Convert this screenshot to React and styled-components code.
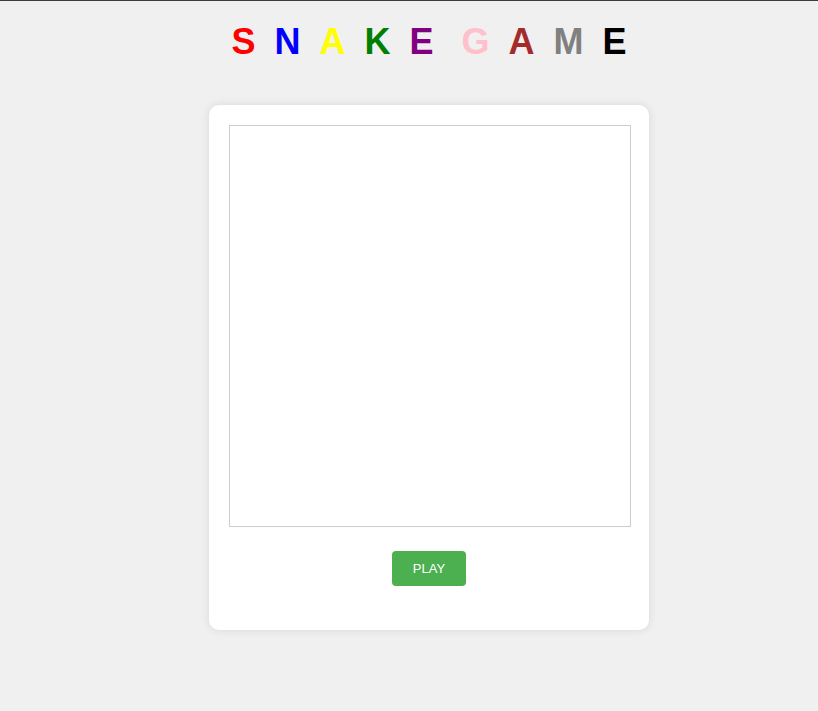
import React from "react";
import styled, { createGlobalStyle } from "styled-components";

const Global = createGlobalStyle`
  html, body { margin: 0; padding: 0; }
  body {
    background: #f0f0f0;
    font-family: "Liberation Sans", Arial, sans-serif;
    border-top: 1px solid #3c3c3c;
    min-height: 710px;
  }
`;

const Page = styled.div`
  display: flex;
  flex-direction: column;
  align-items: center;
  padding-left: 40px;
`;

const Title = styled.h1`
  display: flex;
  align-items: baseline;
  gap: 19px;
  margin: 20px 0 43px;
  font-size: 36px;
  font-weight: bold;
  line-height: 41px;
`;

const Letter = styled.span`
  color: ${(p) => p.$c};
  margin-left: ${(p) => (p.$word ? "9px" : "0")};
`;

const Card = styled.div`
  box-sizing: border-box;
  width: 440px;
  background: #fff;
  border-radius: 10px;
  box-shadow: 0 0 10px rgba(0, 0, 0, 0.1);
  padding: 20px 20px 44px;
  display: flex;
  flex-direction: column;
  align-items: flex-start;
`;

const Board = styled.div`
  flex: none;
  width: 400px;
  height: 400px;
  border: 1px solid #ccc;
  background: #fff;
`;

const PlayButton = styled.button`
  align-self: center;
  margin-top: 24px;
  width: 74px;
  height: 35px;
  background: #4caf50;
  color: #fff;
  border: none;
  border-radius: 4px;
  font-family: "Liberation Sans", Arial, sans-serif;
  font-size: 13px;
  cursor: pointer;
`;

const letters = [
  ["S", "red"],
  ["N", "blue"],
  ["A", "yellow"],
  ["K", "green"],
  ["E", "purple"],
  ["G", "pink", true],
  ["A", "brown"],
  ["M", "gray"],
  ["E", "black"],
];

export default function App() {
  return (
    <>
      <Global />
      <Page>
        <Title>
          {letters.map(([l, c, w], i) => (
            <Letter key={i} $c={c} $word={w}>
              {l}
            </Letter>
          ))}
        </Title>
        <Card>
          <Board />
          <PlayButton>PLAY</PlayButton>
        </Card>
      </Page>
    </>
  );
}
